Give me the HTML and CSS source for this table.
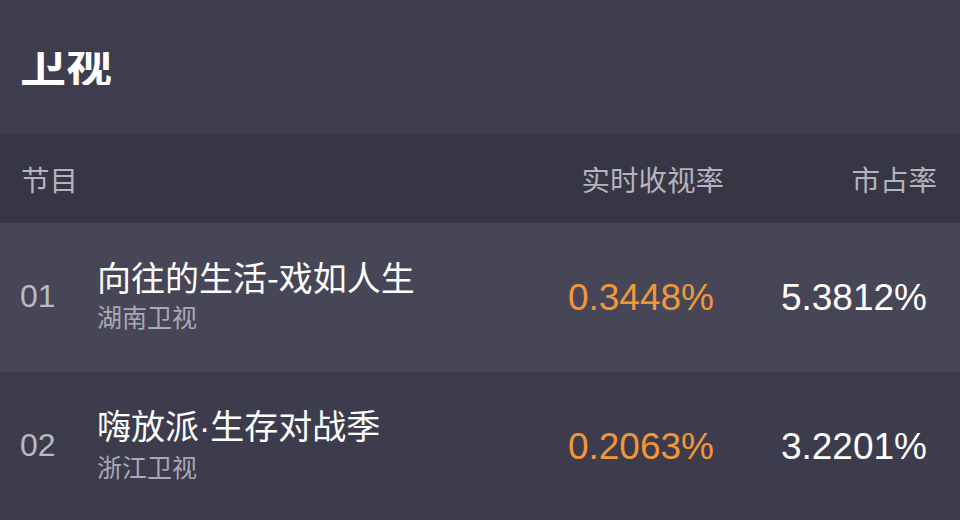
FILE: index.html
```html
<!DOCTYPE html>
<html lang="zh-CN">
<head>
<meta charset="utf-8">
<title>卫视</title>
<link rel="stylesheet" href="styles.css">
</head>
<body>
<div class="page">
  <header class="top">
    <div class="title-clip"><h1 class="title">卫视</h1></div>
  </header>
  <div class="table">
    <div class="thead">
      <div class="th th-name">节目</div>
      <div class="th th-rate">实时收视率</div>
      <div class="th th-share">市占率</div>
    </div>
    <div class="row row-odd">
      <div class="cell-name">
        <span class="rank">01</span>
        <div class="prog">
          <div class="prog-title">向往的生活-戏如人生</div>
          <div class="prog-channel">湖南卫视</div>
        </div>
      </div>
      <div class="val val-rate">0.3448%</div>
      <div class="val val-share">5.3812%</div>
    </div>
    <div class="row row-even">
      <div class="cell-name">
        <span class="rank">02</span>
        <div class="prog">
          <div class="prog-title">嗨放派<span class="dot">·</span>生存对战季</div>
          <div class="prog-channel">浙江卫视</div>
        </div>
      </div>
      <div class="val val-rate">0.2063%</div>
      <div class="val val-share">3.2201%</div>
    </div>
  </div>
</div>
</body>
</html>
```

FILE: styles.css
```css
* { box-sizing: border-box; }

html, body {
  margin: 0;
  padding: 0;
  background: #3e3d4d;
}

body {
  font-family: "Noto Sans CJK SC", "Noto Sans", sans-serif;
  color: #ffffff;
  width: 960px;
  height: 520px;
  overflow: hidden;
}

.top {
  height: 134px;
  padding: 52px 0 0 20px;
}

.title-clip {
  height: 33px;
  overflow: hidden;
}

.title {
  margin: 0;
  font-size: 46px;
  line-height: 20px;
  font-weight: 700;
  color: #ffffff;
}

.thead,
.row {
  display: grid;
  grid-template-columns: 1fr auto 213px;
  align-items: center;
  padding: 0 23px 0 20px;
}

.thead {
  height: 89px;
  background: #373645;
}

.th {
  font-size: 28.5px;
  line-height: 34px;
  color: #b4b3be;
}

.th-name { padding-left: 1px; }
.th-rate,
.th-share { text-align: right; }

.row {
  height: 149px;
}

.row-odd { background: #474656; }
.row-even { background: #3d3c4c; }

.cell-name {
  display: flex;
  align-items: center;
}

.rank {
  width: 77px;
  font-family: "Liberation Sans", Arial, sans-serif;
  font-size: 32px;
  line-height: 36px;
  color: #b9b9c3;
  margin-top: -4px;
}

.prog {
  display: flex;
  flex-direction: column;
  margin-top: -8px;
}

.prog-title {
  font-size: 34px;
  line-height: 46px;
  color: #ffffff;
}

.dot {
  font-family: "Liberation Sans", Arial, sans-serif;
}

.prog-channel {
  font-size: 25px;
  line-height: 33px;
  color: #a9a8b3;
}

.val {
  font-family: "Liberation Sans", Arial, sans-serif;
  font-size: 37px;
  line-height: 44px;
  text-align: right;
  padding-right: 10px;
}

.val-rate { color: #f09739; }
.val-share { color: #ffffff; }
```
